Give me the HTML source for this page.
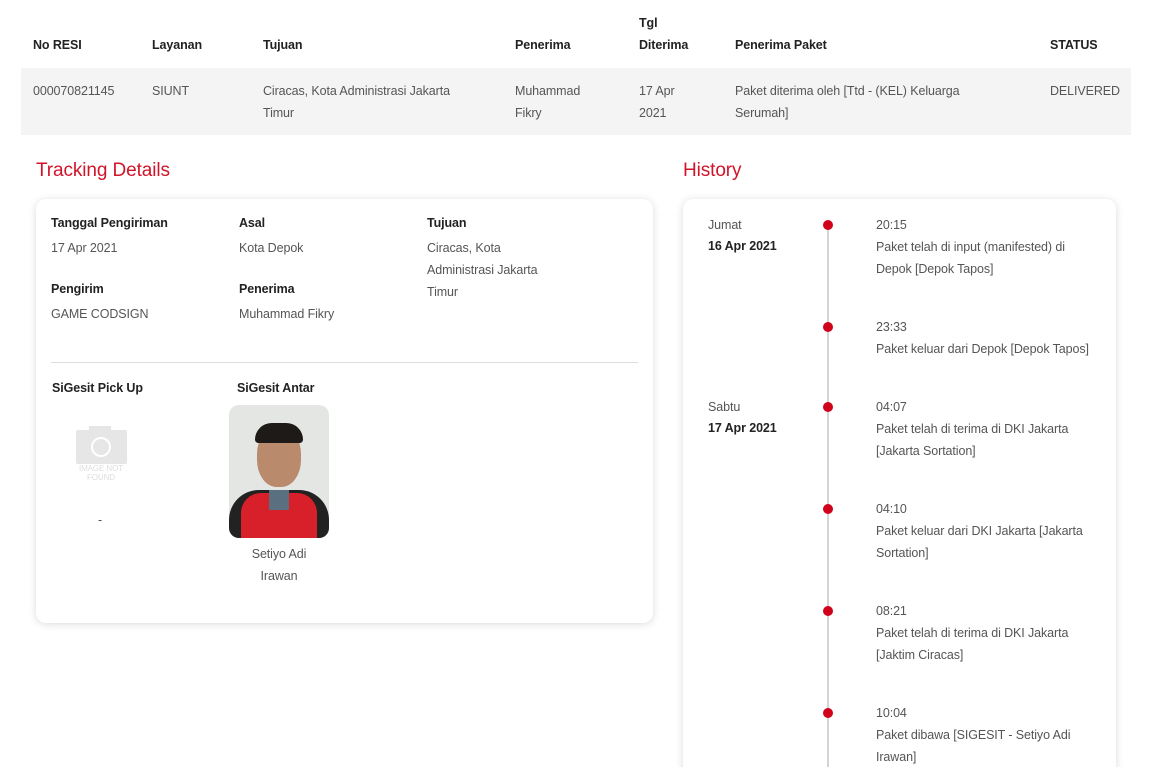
<!DOCTYPE html>
<html><head><meta charset="utf-8"><style>
*{margin:0;padding:0;box-sizing:border-box}
html,body{width:1151px;height:767px;overflow:hidden}
body{background:#fff;font-family:"Liberation Sans",sans-serif;font-size:12.5px;color:#555;position:relative;letter-spacing:-0.1px}
.a{position:absolute;line-height:22px}
.h{font-weight:bold;color:#222}
.b{font-weight:bold;color:#222}
.red{color:#d0142a;font-size:19px}
.card{position:absolute;background:#fff;border-radius:10px;box-shadow:0 1px 8px rgba(0,0,0,.15)}
.dot{position:absolute;left:823px;width:10px;height:10px;border-radius:50%;background:#d0021b}
</style></head><body>
<div class="a h" style="left:639px;top:12px">Tgl<br>Diterima</div>
<div class="a h" style="left:33px;top:34px">No RESI</div>
<div class="a h" style="left:152px;top:34px">Layanan</div>
<div class="a h" style="left:263px;top:34px">Tujuan</div>
<div class="a h" style="left:515px;top:34px">Penerima</div>
<div class="a h" style="left:735px;top:34px">Penerima Paket</div>
<div class="a h" style="left:1050px;top:34px">STATUS</div>
<div style="position:absolute;left:21px;top:68px;width:1110px;height:67px;background:#f4f4f4"></div>
<div class="a" style="left:33px;top:80px">000070821145</div>
<div class="a" style="left:152px;top:80px">SIUNT</div>
<div class="a" style="left:263px;top:80px;width:205px">Ciracas, Kota Administrasi Jakarta Timur</div>
<div class="a" style="left:515px;top:80px;width:90px">Muhammad Fikry</div>
<div class="a" style="left:639px;top:80px;width:50px">17 Apr 2021</div>
<div class="a" style="left:735px;top:80px;width:250px">Paket diterima oleh [Ttd - (KEL) Keluarga Serumah]</div>
<div class="a" style="left:1050px;top:80px">DELIVERED</div>

<div class="a red" style="left:36px;top:160px">Tracking Details</div>
<div class="a red" style="left:683px;top:160px">History</div>

<div class="card" style="left:36px;top:199px;width:617px;height:424px"></div>
<div class="a b" style="left:51px;top:212px">Tanggal Pengiriman</div>
<div class="a" style="left:51px;top:237px">17 Apr 2021</div>
<div class="a b" style="left:239px;top:212px">Asal</div>
<div class="a" style="left:239px;top:237px">Kota Depok</div>
<div class="a b" style="left:427px;top:212px">Tujuan</div>
<div class="a" style="left:427px;top:237px;width:140px">Ciracas, Kota Administrasi Jakarta Timur</div>
<div class="a b" style="left:51px;top:278px">Pengirim</div>
<div class="a" style="left:51px;top:303px">GAME CODSIGN</div>
<div class="a b" style="left:239px;top:278px">Penerima</div>
<div class="a" style="left:239px;top:303px">Muhammad Fikry</div>
<div style="position:absolute;left:51px;top:362px;width:587px;height:1px;background:#ddd"></div>
<div class="a b" style="left:52px;top:377px">SiGesit Pick Up</div>
<div class="a b" style="left:237px;top:377px">SiGesit Antar</div>
<div style="position:absolute;left:76px;top:430px;width:51px;height:34px;background:#e6e6e6;border-radius:2px"></div>
<div style="position:absolute;left:89px;top:426px;width:22px;height:8px;background:#e6e6e6"></div>
<div style="position:absolute;left:91px;top:437px;width:20px;height:20px;border:2px solid #fff;border-radius:50%"></div>
<div class="a" style="left:70px;top:464px;width:62px;font-size:8px;line-height:9px;color:#ddd;text-align:center">IMAGE NOT FOUND</div>
<div class="a" style="left:98px;top:509px">-</div>
<div style="position:absolute;left:229px;top:405px;width:100px;height:133px;border-radius:10px;overflow:hidden;background:#e4e6e4">
 <div style="position:absolute;left:0;top:85px;width:100px;height:60px;background:#222;border-radius:30px 30px 0 0"></div>
 <div style="position:absolute;left:12px;top:88px;width:76px;height:50px;background:#d8202a;border-radius:20px 20px 0 0"></div>
 <div style="position:absolute;left:40px;top:85px;width:20px;height:20px;background:#5a7080"></div>
 <div style="position:absolute;left:28px;top:22px;width:44px;height:60px;background:#b98a6c;border-radius:45%"></div>
 <div style="position:absolute;left:26px;top:18px;width:48px;height:20px;background:#1e1a18;border-radius:20px 20px 4px 4px"></div>
</div>
<div class="a" style="left:229px;top:543px;width:100px;text-align:center">Setiyo Adi<br>Irawan</div>

<div class="card" style="left:683px;top:199px;width:433px;height:600px"></div>
<div style="position:absolute;left:827px;top:225px;width:2px;height:560px;background:#d4d4d4"></div>
<div class="a" style="left:708px;top:214px">Jumat</div>
<div class="a b" style="left:708px;top:235px">16 Apr 2021</div>
<div class="a" style="left:708px;top:396px">Sabtu</div>
<div class="a b" style="left:708px;top:417px">17 Apr 2021</div>
<div class="dot" style="top:220px"></div>
<div class="a" style="left:876px;top:214px;width:215px">20:15<br>Paket telah di input (manifested) di Depok [Depok Tapos]</div>
<div class="dot" style="top:322px"></div>
<div class="a" style="left:876px;top:316px;width:235px">23:33<br>Paket keluar dari Depok [Depok Tapos]</div>
<div class="dot" style="top:402px"></div>
<div class="a" style="left:876px;top:396px;width:215px">04:07<br>Paket telah di terima di DKI Jakarta [Jakarta Sortation]</div>
<div class="dot" style="top:504px"></div>
<div class="a" style="left:876px;top:498px;width:220px">04:10<br>Paket keluar dari DKI Jakarta [Jakarta Sortation]</div>
<div class="dot" style="top:606px"></div>
<div class="a" style="left:876px;top:600px;width:215px">08:21<br>Paket telah di terima di DKI Jakarta [Jaktim Ciracas]</div>
<div class="dot" style="top:708px"></div>
<div class="a" style="left:876px;top:702px;width:215px">10:04<br>Paket dibawa [SIGESIT - Setiyo Adi Irawan]</div>
</body></html>
